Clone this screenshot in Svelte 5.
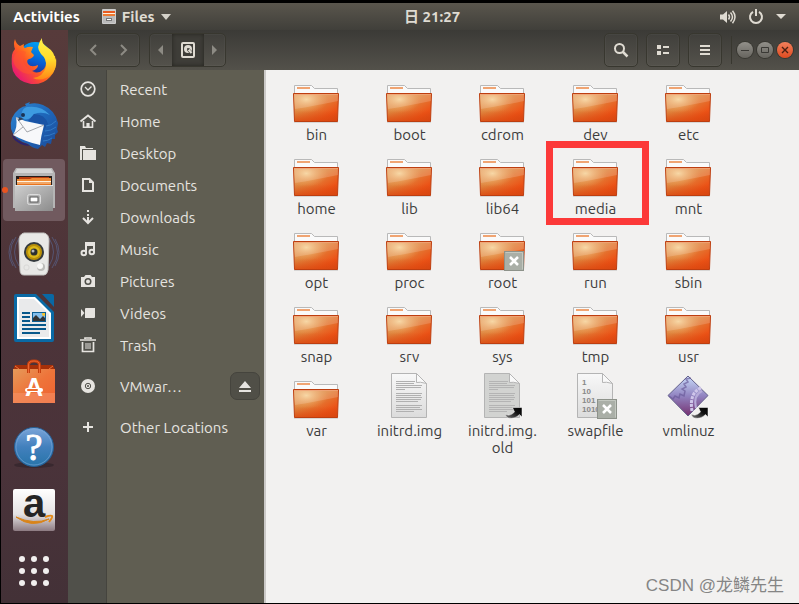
<script>
  const dock = ['Firefox', 'Thunderbird', 'Files', 'Rhythmbox', 'LibreOffice Writer', 'Ubuntu Software', 'Help', 'Amazon', 'Show Applications'];

  const places = [
    { name: 'Recent', icon: 'recent' },
    { name: 'Home', icon: 'home' },
    { name: 'Desktop', icon: 'desktop' },
    { name: 'Documents', icon: 'documents' },
    { name: 'Downloads', icon: 'downloads' },
    { name: 'Music', icon: 'music' },
    { name: 'Pictures', icon: 'pictures' },
    { name: 'Videos', icon: 'videos' },
    { name: 'Trash', icon: 'trash' },
    { name: 'VMwar…', icon: 'disc', apart: true, eject: true },
    { name: 'Other Locations', icon: 'plus', apart: true }
  ];

  const folder = (name, extra = {}) => ({ name, kind: 'folder', ...extra });
  const files = [
    folder('bin'), folder('boot'), folder('cdrom'), folder('dev'), folder('etc'),
    folder('home'), folder('lib'), folder('lib64'), folder('media', { marked: true }), folder('mnt'),
    folder('opt'), folder('proc'), folder('root', { locked: true }), folder('run'), folder('sbin'),
    folder('snap'), folder('srv'), folder('sys'), folder('tmp'), folder('usr'),
    folder('var'),
    { name: 'initrd.img', kind: 'text' },
    { name: 'initrd.img.old', kind: 'text', link: true },
    { name: 'swapfile', kind: 'binary', locked: true },
    { name: 'vmlinuz', kind: 'exec', link: true }
  ];
  const textLines = [8, 10, 12, 14, 16, 20, 22, 24, 26, 28, 32, 34, 36, 38];
  const textEnds = [30, 29, 37, 36, 20, 37, 36, 37, 36, 33, 37, 35, 37, 29];
</script>

<svg class="defs" width="0" height="0" aria-hidden="true">
  <defs>
    <linearGradient id="folderBase" x1="0" y1="0" x2="1" y2="1">
      <stop offset="0" stop-color="#e2a468" /><stop offset=".4" stop-color="#e0873f" /><stop offset=".78" stop-color="#ec5216" /><stop offset="1" stop-color="#d84413" />
    </linearGradient>
    <linearGradient id="folderShade" x1="0" y1="0" x2="0" y2="1">
      <stop offset=".6" stop-color="#d8470f" stop-opacity="0" /><stop offset="1" stop-color="#d8470f" stop-opacity=".7" />
    </linearGradient>
    <radialGradient id="folderGlow" cx=".28" cy=".2" r=".5">
      <stop offset="0" stop-color="#f6d196" /><stop offset="1" stop-color="#ee9c58" stop-opacity="0" />
    </radialGradient>
    <linearGradient id="paper" x1="0" y1="0" x2="0" y2="1">
      <stop offset="0" stop-color="#f8f8f8" /><stop offset="1" stop-color="#dcdcdc" />
    </linearGradient>
    <linearGradient id="violet" x1="0" y1="0" x2="0" y2="1">
      <stop offset="0" stop-color="#c9dcfa" /><stop offset=".5" stop-color="#9183c0" /><stop offset="1" stop-color="#75306f" />
    </linearGradient>
    <linearGradient id="arrowInk" x1="0" y1="1" x2="1" y2="0">
      <stop offset="0" stop-color="#777" /><stop offset=".6" stop-color="#111" /><stop offset="1" stop-color="#000" />
    </linearGradient>
    <linearGradient id="metal" x1="0" y1="0" x2="1" y2="1">
      <stop offset="0" stop-color="#cfcfcf" /><stop offset="1" stop-color="#8c8c8c" />
    </linearGradient>
  </defs>
</svg>

<div class="screen">
  <header class="topbar">
    <div class="top-left">
      <button class="plain activities">Activities</button>
      <button class="plain app-menu">
        <svg width="14" height="15" viewBox="0 0 14 15"><rect width="14" height="15" rx="1" fill="#ccc" /><rect x="1" y="2" width="12" height="6" fill="#4b2b1c" /><path d="M1 3h12" stroke="#e85a20" stroke-width="2" /><path d="M1 4.500h12" stroke="#fff0dc" /><path d="M1 6h12" stroke="#ec7a32" stroke-width="2" /><rect x="1" y="7" width="12" height="7" fill="#bbb" /><rect x="4.500" y="9.500" width="5" height="2" fill="#fff" stroke="#777" /></svg>
        <span>Files</span>
        <svg width="10" height="6" viewBox="0 0 10 6"><path d="M0 0h10L5 6z" fill="#d5d2ca" /></svg>
      </button>
    </div>
    <button class="plain clock">日 21:27</button>
    <div class="top-right">
      <button class="plain status" aria-label="System menu">
        <svg width="16" height="14" viewBox="0 0 16 14" fill="none" stroke="#dfdbd2" stroke-width="1.500"><path d="M0 4.500h3L7 1v12L3 9.500H0z" fill="#dfdbd2" stroke="none" /><path d="M8.500 4.500q2 2.500 0 5M10.500 2.500q4 4.500 0 9M12.500 .8q5 6.200 0 12.400" /></svg>
        <svg width="14" height="15" viewBox="0 0 14 15" fill="none" stroke="#dfdbd2" stroke-width="2"><path d="M4 2.800a6 6 0 1 0 6 0M7 0v7" /></svg>
        <svg width="10" height="5" viewBox="0 0 10 5"><path d="M0 0h10L5 5z" fill="#dfdbd2" /></svg>
      </button>
    </div>
  </header>

  <div class="below">
    <aside class="dock">
      {#each dock as app (app)}
        <button class="plain app" class:active={app === 'Files'} aria-label={app}>
          <svg width="48" height="48" viewBox="0 0 48 48">
            {#if app === 'Firefox'}
              <defs>
                <linearGradient id="fxFlame" x1="1" y1=".1" x2=".1" y2=".9"><stop offset="0" stop-color="#ffe43c" /><stop offset=".3" stop-color="#ffab18" /><stop offset=".62" stop-color="#ff5925" /><stop offset="1" stop-color="#e4107d" /></linearGradient>
                <linearGradient id="fxBlue" x1=".7" y1="0" x2=".4" y2="1"><stop offset="0" stop-color="#00a5f5" /><stop offset=".6" stop-color="#075bd0" /><stop offset="1" stop-color="#302078" /></linearGradient>
                <linearGradient id="fxTail" x1=".3" y1="0" x2=".3" y2="1"><stop offset="0" stop-color="#fff14a" /><stop offset=".5" stop-color="#ffdc2c" /><stop offset="1" stop-color="#ff8716" /></linearGradient>
              </defs>
              <circle cx="25" cy="21" r="17" fill="url(#fxBlue)" />
              <path d="M5 1Q6 6 10 8L14 6Q13 9 15 10Q19 8 23 9L21 14L24 17Q23 20 19 21Q16 22 18 26Q21 30 28 27Q28 31 22 33Q28 37 34 31Q38 26 34 17L45 18Q48 31 40 39Q33 47 21 46Q8 44 3 33Q1 26 2 17Q3 13 5 11Q3 6 5 1Z" fill="url(#fxFlame)" />
              <path d="M32 0Q31 5 37 9Q45 14 45 22L46 20Q48 34 36 40Q29 43 23 40Q33 39 36 29Q37 21 31 16Q25 9 32 0Z" fill="url(#fxTail)" />
              <path d="M3 20Q8 10 16 14L14 19Q11 23 16 28Q19 33 26 34Q16 39 8 31Q3 27 3 20Z" fill="#ff572c" opacity=".5" />
            {:else if app === 'Thunderbird'}
              <defs><linearGradient id="tbBlue" x1="0" y1="0" x2="1" y2="1"><stop offset="0" stop-color="#2f86d0" /><stop offset=".5" stop-color="#1e66b9" /><stop offset="1" stop-color="#1c4a97" /></linearGradient></defs>
              <path d="M15 2L20 0L19 2Q26 0 33 3Q45 8 48 21L47 27L48 30L45 33L45 37L42 37L41 42L37 41L35 45L32 43L28 47Q22 46 18 42Q4 38 1 27Q-1 15 9 7Q13 4 16 4Z" fill="url(#tbBlue)" />
              <path d="M1 27Q2 38 17 42L20 44Q8 43 3 36Z" fill="#2c236e" />
              <path d="M17 5Q31 3 40 13Q32 9 24 12Q20 19 13 17Q10 14 12 10Q13 6 17 5Z" fill="#3d9be0" />
              <path d="M24 12Q35 12 38 22L34 28L33 23L18 19Z" fill="#1953a5" />
              <path d="M6 15L15 19L34 23Q31 34 30 43Q16 40 3 33Q8 25 6 15Z" fill="#f7f8fa" />
              <path d="M6 15L17 30L34 23M3 33L13 25" fill="none" stroke="#a4a7ac" />
              <path d="M36 24Q41 24 46 19M35 29Q41 29 46 25M34 34Q39 34 45 31M33 39Q38 39 42 36" fill="none" stroke="#3b87d0" opacity=".7" />
              <circle cx="13" cy="13" r="2" fill="#1a3455" /><path d="M9 15L14 17L8 19Z" fill="#30465f" />
            {:else if app === 'Files'}
              <path d="M6 2h36l3 5v35H3V7z" fill="#b5b5b5" />
              <path d="M7 3h34l2 4H5z" fill="#d5d5d5" />
              <rect x="6" y="10" width="36" height="10" fill="#251d1a" />
              <path d="M9 11h30v3H9z" fill="#b93d0e" /><path d="M7 13h13l2-1h19v3H7z" fill="#ef8a35" /><path d="M7 15h34v1H7z" fill="#fff2de" /><path d="M7 16h34v3H7z" fill="#e9741e" /><path d="M7 17h34" stroke="#fbd9b0" />
              <rect x="5" y="19" width="38" height="26" fill="url(#metal)" /><path d="M5 19.500h38" stroke="#e4e4e4" />
              <rect x="17.500" y="28.500" width="13" height="10" rx="2" fill="#b4b4b4" stroke="#ddd" /><rect x="20" y="31" width="8" height="5" fill="#fff" stroke="#555" />
            {:else if app === 'Rhythmbox'}
              <g fill="none" stroke="#5d79b5" opacity=".45"><path d="M6 7Q-5 22 6 38M3 9Q-5 22 3 36M9 8Q0 22 9 36M42 7Q53 22 42 38M45 9Q53 22 45 36M39 8Q48 22 39 36" /></g>
              <path d="M14 3h20q5 1 5 8l-1 29q-1 5-4 5H14q-4 0-4-5L9 11q0-7 5-8z" fill="#e8e8e6" stroke="#c4c4c2" />
              <circle cx="24" cy="22" r="10" fill="#343a3e" /><circle cx="24" cy="22" r="8" fill="#b99009" /><circle cx="24" cy="22" r="6" fill="#dcb91a" /><circle cx="24" cy="22" r="3.500" fill="#2c3030" /><circle cx="23" cy="21" r="1.500" fill="#bbb" />
              <circle cx="31" cy="37" r="4" fill="#bcbcb9" /><circle cx="30" cy="36" r="3" fill="#f9f9f7" /><rect x="14" y="35" width="5" height="5" rx="2" fill="none" stroke="#d8d8d6" />
            {:else if app === 'LibreOffice Writer'}
              <path d="M6 0h20l18 18v28q0 2-2 2H6q-2 0-2-2V2q0-2 2-2z" fill="#0a6aa5" /><path d="M32 0h10q2 0 2 2v11z" fill="#0968a4" />
              <path d="M7 3h18l16 16v26H7z" fill="#fff" /><path d="M9 5h15l15 15v23H9z" fill="#e9eaeb" />
              <path d="M12 19h8M12 23h8M12 27h8M12 31h24M12 35h24M12 39h18" stroke="#07588b" stroke-width="2" />
              <rect x="22" y="18" width="14" height="10" fill="#83bfed" /><circle cx="34" cy="20" r="2" fill="#f8c229" /><path d="M22 28v-3l4-4 4 4 3-3 3 3v3z" fill="#343434" /><rect x="22.500" y="18.500" width="13" height="9" fill="none" stroke="#0b5e93" />
            {:else if app === 'Ubuntu Software'}
              <defs><linearGradient id="bag" x1="0" y1="0" x2="1" y2="1"><stop offset="0" stop-color="#e59a5a" /><stop offset=".5" stop-color="#ee743a" /><stop offset="1" stop-color="#ef6130" /></linearGradient></defs>
              <path d="M5 7h38l2 5H3z" fill="#a53009" /><path d="M5 8l4 3M43 8l-4 3" stroke="#ed743f" />
              <rect x="3" y="11" width="42" height="34" fill="url(#bag)" /><path d="M3 35h42v10H3z" fill="#f59770" opacity=".5" />
              <path d="M18.500 15V7q0-4 5.500-4t5.500 4v8" fill="none" stroke="#c43f0e" stroke-width="3" /><path d="M18.500 15V7q0-4 5.500-4t5.500 4v8" fill="none" stroke="#ee6732" />
              <text x="24" y="38" text-anchor="middle" class="bag-letter">A</text><rect x="15" y="30" width="18" height="4" rx="2" fill="#fff" /><rect x="17" y="31" width="11" height="2" rx="1" fill="#ed6e30" />
            {:else if app === 'Help'}
              <defs><linearGradient id="helpBlue" x1="0" y1="0" x2="0" y2="1"><stop offset="0" stop-color="#7ba5d9" /><stop offset=".5" stop-color="#4280bd" /><stop offset="1" stop-color="#2774a9" /></linearGradient></defs>
              <ellipse cx="24" cy="43" rx="20" ry="3" fill="#281e23" opacity=".5" /><circle cx="24" cy="25" r="19.500" fill="url(#helpBlue)" stroke="#245e94" /><circle cx="24" cy="25" r="18" fill="none" stroke="#7da8d8" opacity=".6" /><text x="24" y="38" text-anchor="middle" class="help-mark">?</text>
            {:else if app === 'Amazon'}
              <defs><linearGradient id="tile" x1="0" y1="0" x2="0" y2="1"><stop offset="0" stop-color="#fff" /><stop offset=".6" stop-color="#e4e2e3" /><stop offset="1" stop-color="#8d7b82" /></linearGradient></defs>
              <rect x="3" y="3" width="42" height="42" rx="2" fill="url(#tile)" /><text x="24" y="31" text-anchor="middle" class="amazon-letter">a</text><path d="M6 31Q22 43 39 33Q24 39 6 31z" fill="#d98419" stroke="#d98419" /><path d="M35 31q6-2 7-1t-3 6" fill="none" stroke="#e58a17" stroke-width="2" />
            {:else}
              {#each [12, 24, 36] as x}{#each [12, 24, 36] as y}<circle cx={x} cy={y} r="3" fill="#f1efee" />{/each}{/each}
            {/if}
          </svg>
        </button>
      {/each}
    </aside>

    <section class="window">
      <div class="toolbar">
        <div class="group history">
          <button class="plain" aria-label="Back"><svg width="8" height="12" viewBox="0 0 8 12" fill="none" stroke="#8d8b84" stroke-width="2"><path d="M7 1L2 6l5 5" /></svg></button>
          <button class="plain" aria-label="Forward"><svg width="8" height="12" viewBox="0 0 8 12" fill="none" stroke="#8d8b84" stroke-width="2"><path d="M1 1l5 5-5 5" /></svg></button>
        </div>
        <div class="group path">
          <button class="plain" aria-label="Scroll path left"><svg width="5" height="10" viewBox="0 0 5 10"><path d="M5 0v10L0 5z" fill="#8d8b84" /></svg></button>
          <button class="plain pressed" aria-label="Computer"><svg width="14" height="16" viewBox="0 0 14 16"><rect x="1" y="1" width="12" height="14" rx="1" fill="none" stroke="#dfdbd2" stroke-width="2" /><circle cx="7" cy="7" r="4" fill="#dfdbd2" /><path d="M7 7l4 5" stroke="#42413c" stroke-width="3" /><path d="M7.500 7.500l3 3.500" stroke="#dfdbd2" stroke-width="2" /><circle cx="7" cy="7" r="1" fill="#42413c" /></svg></button>
          <button class="plain" aria-label="Scroll path right"><svg width="5" height="10" viewBox="0 0 5 10"><path d="M0 0v10l5-5z" fill="#8d8b84" /></svg></button>
        </div>
        <div class="tools">
          <button class="group" aria-label="Search"><svg width="14" height="14" viewBox="0 0 14 14" fill="none" stroke="#dfdbd2" stroke-width="2"><circle cx="5.500" cy="5.500" r="4.500" /><path d="M8.500 8.500l5 5" stroke-width="2.500" /></svg></button>
          <button class="group" aria-label="List view"><svg width="12" height="10" viewBox="0 0 12 10" fill="#dfdbd2"><path d="M0 0h4v4H0zM6 1h6v2H6zM0 6h4v4H0zM6 7h6v2H6z" /></svg></button>
          <button class="group" aria-label="Menu"><svg width="10" height="10" viewBox="0 0 10 10" fill="#dfdbd2"><path d="M0 0h10v2H0zM0 4h10v2H0zM0 8h10v2H0z" /></svg></button>
        </div>
        <div class="controls">
          <button aria-label="Minimize"><svg width="10" height="10" viewBox="0 0 10 10" stroke="#3a3935"><path d="M1 5.500h8" /></svg></button>
          <button aria-label="Maximize"><svg width="10" height="10" viewBox="0 0 10 10" stroke="#3a3935" fill="none"><path d="M1.500 2.500h7v5h-7z" /></svg></button>
          <button class="close" aria-label="Close"><svg width="10" height="10" viewBox="0 0 10 10" stroke="#4b2012" stroke-width="1.400"><path d="M2 2l6 6M8 2L2 8" /></svg></button>
        </div>
      </div>

      <div class="panes">
        <nav class="sidebar" aria-label="Places">
          {#each places as place (place.name)}
            <div class="place" class:apart={place.apart}>
              <a href="#top">
                <span class="place-icon">
                  <svg width="16" height="16" viewBox="0 0 16 16" fill="none" stroke="#e6e4e0" stroke-width="2">
                    {#if place.icon === 'recent'}<circle cx="8" cy="8" r="6.800" stroke-width="1.700" /><path d="M5 6l3 3 3.500-3.500" stroke-width="1.300" />
                    {:else if place.icon === 'home'}<path d="M.5 8.500L8 2.500l7.500 6" stroke-width="1.800" /><path d="M3.500 8v6.200h3.700v-3.500h1.600v3.500h3.700V8" stroke-width="1.600" />
                    {:else if place.icon === 'desktop'}<path d="M0 1h5l1 2h7v1H2v11H0zM3 5h13v10H3z" fill="#e6e4e0" stroke="none" />
                    {:else if place.icon === 'documents'}<path d="M3 2h6.500L13 5.500V14H3z" /><path d="M9 2v4h4z" fill="#e6e4e0" stroke="none" />
                    {:else if place.icon === 'downloads'}<path d="M8 1v2M8 5v2M8 8v5M3 9l5 5 5-5" />
                    {:else if place.icon === 'music'}<path d="M6 12V2h8v9M6 4h8" /><circle cx="3.800" cy="12" r="2.300" /><circle cx="11.800" cy="11" r="2.300" />
                    {:else if place.icon === 'pictures'}<path d="M1 4h3l1.500-2h5L12 4h3v10H1z" fill="#e6e4e0" stroke="none" /><circle cx="8" cy="8.500" r="3.500" fill="#50504a" stroke="none" /><circle cx="8" cy="8.500" r="2" fill="#e6e4e0" stroke="none" />
                    {:else if place.icon === 'videos'}<path d="M1 4l3.500 4L1 12zM5 4q0-1 1-1h9v9q0 1-1 1H5z" fill="#e6e4e0" stroke="none" />
                    {:else if place.icon === 'trash'}<path d="M0 3h16M5 2V1h6v1M2.500 5v9.500h11V5" stroke-width="1.700" /><path d="M6 6v6M8 6v6M10 6v6" stroke-width="1" />
                    {:else if place.icon === 'disc'}<circle cx="8" cy="8" r="7" fill="#e6e4e0" stroke="none" /><circle cx="8" cy="8" r="2.700" stroke="#50504a" stroke-width="1" /><circle cx="8" cy="8" r="1" fill="#50504a" stroke="none" />
                    {:else}<path d="M8 3v10M3 8h10" />{/if}
                  </svg>
                </span>
                <span class="place-name">{place.name}</span>
              </a>
              {#if place.eject}
                <button class="eject" aria-label="Eject"><svg width="12" height="11" viewBox="0 0 12 11" fill="#e6e4e0"><path d="M6 0l6 7H0zM0 9h12v2H0z" /></svg></button>
              {/if}
            </div>
          {/each}
        </nav>

        <main class="files">
          {#each files as file (file.name)}
            <button class="plain file">
              <svg width="48" height="48" viewBox="1 0 48 48">
                {#if file.kind === 'folder'}
                  <path d="M2 45h44v2H2z" fill="#999" opacity=".3" />
                  <path d="M2.500 28V9.500h17l3 3h23V28z" fill="#fafafa" stroke="#b9b9b9" /><rect x="5" y="11" width="13" height="2" fill="#f0a472" />
                  <path d="M1.500 17.500h45l-1 28h-43z" fill="url(#folderBase)" stroke="#bd3e10" /><path d="M2 18h44l-1 27H3z" fill="url(#folderShade)" /><path d="M2 18h44l-1 27H3z" fill="url(#folderGlow)" /><path d="M2 18h44v7Q22 30 3 33z" fill="#fff" opacity=".16" /><path d="M2 18.500h44" stroke="#f2a478" opacity=".8" />
                {:else if file.kind === 'exec'}
                  <path d="M24 4l20 19.500L24 44 4 23.500z" fill="url(#violet)" stroke="#64618b" /><path d="M5 24l4 3 2-3 4 2 1-4 4 2 1-5-3-2 4-2-2-3 4-2-2-3 5-1" fill="none" stroke="#675896" stroke-width="1.500" opacity=".65" /><path d="M37 16Q25 21 28 39" fill="none" stroke="#cfc6ea" stroke-width="3" stroke-dasharray="3 1" /><path d="M38 19Q29 23 32 36" fill="none" stroke="#b7acd9" stroke-width="2" />
                {:else}
                  <path d="M6.500 1.500h25l10 10v34h-35z" fill={file.link ? '#d2d3d1' : 'url(#paper)'} stroke="#b4b4b4" /><path d="M31.500 1.500v9q3-1 10 1z" fill="#f9f9f9" stroke="#b5b5b5" />
                  {#if file.kind === 'text'}
                    {#each textLines as y, i}<path d="M11 {y + 1.5}H{textEnds[i]}" stroke={file.link ? '#b4b4b4' : '#b0b0b0'} />{/each}
                  {:else}
                    <g class="bits"><text x="11" y="13">1</text><text x="11" y="22">10</text><text x="11" y="31">101</text><text x="11" y="40">1010</text></g>
                  {/if}
                {/if}
                {#if file.link}<path d="M34.500 35.500h9.500v9.500l-2.500-2.500q-5 5-11 3.500-3-1-3-4 4 3 9-2z" fill="url(#arrowInk)" stroke="#fff" stroke-width=".5" />{/if}
                {#if file.locked}<rect x="26.500" y="27.500" width="19" height="19" fill="#aaafa7" stroke="#8d928a" /><path d="M27.500 28.500h17v17" fill="none" stroke="#c3c8c0" /><path d="M32 33l8 8M40 33l-8 8" stroke="#fff" stroke-width="2.500" />{/if}
              </svg>
              <span>{#if file.name === 'initrd.img.old'}initrd.img.<wbr />old{:else}{file.name}{/if}</span>
              {#if file.marked}<i class="mark"></i>{/if}
            </button>
          {/each}
          <p class="credit">CSDN @龙鳞先生</p>
        </main>
      </div>
    </section>
  </div>
</div>

<style>
  :global(body) { margin: 0; background: #000; }
  .screen { box-sizing: border-box; height: 100vh; padding: 3px 0 1px 1px; display: flex; flex-direction: column; overflow: hidden; background: #000; font: 15px/17px Ubuntu, "Noto Sans", "Noto Sans CJK SC", sans-serif; color: #dfdbd2; }
  .defs { position: absolute; }
  svg { display: block; flex: none; overflow: visible; }
  button { box-sizing: border-box; font: inherit; color: inherit; cursor: pointer; }
  .plain { border: 0; padding: 0; background: none; }
  .topbar { display: flex; align-items: center; height: 27px; flex: none; background: linear-gradient(#5a564d, #403f3a); font-weight: 700; text-shadow: 0 -1px #302f2b; }
  .top-left { flex: 6 1 0; display: flex; align-items: center; gap: 22px; padding-left: 12px; box-sizing: border-box; }
  .activities { color: #fff; }
  .app-menu { display: flex; align-items: center; gap: 6px; }
  .top-right { flex: 5 1 0; display: flex; justify-content: flex-end; padding-right: 13px; box-sizing: border-box; }
  .status { display: flex; align-items: center; gap: 13px; }
  .below { flex: 1; min-height: 0; display: flex; }
  .dock { width: 67px; flex: none; display: flex; flex-direction: column; align-items: center; gap: 2px; padding: 1px 1px 0 0; box-sizing: border-box; background: linear-gradient(#573b3b, #4d3439 45%, #4a333a 75%, #433137); overflow: hidden; }
  .app { position: relative; width: 62px; height: 62px; flex: none; display: grid; place-items: center; border-radius: 4px; }
  .app:last-child { height: 56px; }
  .active { background: #715a5f; }
  .active::before { content: ""; position: absolute; left: -1px; top: 28px; width: 6px; height: 6px; border-radius: 50%; background: #e95420; }
  .bag-letter { font: 700 25px "Liberation Sans", sans-serif; fill: #fff; }
  .help-mark { font: 400 38px "Liberation Serif", serif; fill: #fff; stroke: #fff; }
  .amazon-letter { font: 700 40px "Liberation Sans", sans-serif; fill: #252525; }
  .window { flex: 1; min-width: 0; display: flex; flex-direction: column; }
  .toolbar { height: 40px; flex: none; display: flex; align-items: center; gap: 9px; padding: 0 6px 0 8px; background: linear-gradient(#3b3a36, #53514a); }
  .group { box-sizing: border-box; height: 34px; border: 1px solid #38372f; border-radius: 5px; background: #ffffff05; box-shadow: inset 0 0 0 1px #ffffff08; display: flex; overflow: hidden; }
  .group button { flex: 1; display: grid; place-items: center; }
  .history { width: 64px; }
  .path { width: 77px; }
  .path .pressed { flex: 0 0 32px; background: #3e3d38; box-shadow: inset 0 0 4px #25241f; }
  .tools { display: flex; gap: 8px; margin-left: auto; }
  .tools .group { width: 34px; padding: 0; align-items: center; justify-content: center; }
  .controls { display: flex; align-items: center; gap: 4px; height: 28px; padding-left: 5px; border-left: 1px solid #38372f; }
  .controls button { width: 16px; height: 16px; padding: 0; border: 0; border-radius: 50%; display: grid; place-items: center; background: linear-gradient(#92908a, #66645e); box-shadow: 0 0 0 1px #383731; }
  .controls .close { background: linear-gradient(#f2805c, #df4b20); }
  .panes { flex: 1; min-height: 0; display: flex; }
  .sidebar { width: 196px; flex: none; box-sizing: border-box; padding-top: 3px; background: linear-gradient(to right, #50504a 38px, #45443e 38px, #45443e 39px, #605e52 39px); }
  .place { display: flex; align-items: center; height: 32px; padding-right: 4px; }
  .place a { flex: 1; display: flex; align-items: center; color: #e6e4e0; text-decoration: none; }
  .apart { margin-top: 9px; }
  .place-icon { width: 52px; padding-left: 12px; box-sizing: border-box; }
  .eject { width: 30px; height: 28px; padding: 0; display: grid; place-items: center; border: 1px solid #45443d; border-radius: 7px; background: #504f47; }
  .files { position: relative; flex: 1; min-width: 0; box-sizing: border-box; display: grid; grid-template-columns: repeat(auto-fill, 93px); grid-auto-rows: 74px; padding: 6px 0 0 4px; border-left: 2px solid #cbc9c7; background: #f2f1f0; }
  .file { position: relative; display: flex; flex-direction: column; align-items: center; gap: 2px; color: #3c3c3c; }
  .file span { max-width: 82px; }
  .bits { font: 700 8px "Liberation Sans", sans-serif; fill: #888; }
  .mark { position: absolute; inset: -9px -7px -1px -3px; border: 7px solid #fc3939; }
  .credit { position: absolute; right: 15px; bottom: 7px; margin: 0; font: 17px/20px "Liberation Sans", "Noto Sans CJK SC", sans-serif; color: #858585; }
</style>
